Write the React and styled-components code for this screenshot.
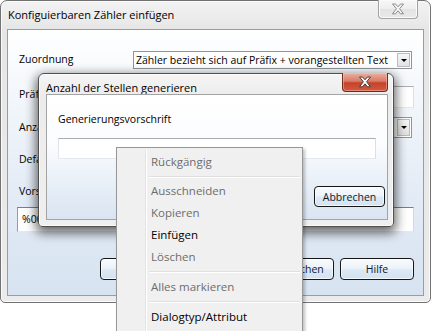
import React from "react";
import styled, { createGlobalStyle } from "styled-components";

const GlobalStyle = createGlobalStyle`
  html, body { margin: 0; padding: 0; background: #ffffff; }
  body {
    font-family: "Open Sans", "Noto Sans", sans-serif;
    font-size: 10.5px;
    color: #000;
  }
`;

const Desktop = styled.div`
  position: relative;
  width: 432px;
  height: 331px;
  overflow: hidden;
  background: #ffffff;
`;

const Window = styled.div`
  width: 431px;
  height: 303px;
  box-sizing: border-box;
  border: 1px solid #727272;
  border-radius: 7px 7px 5px 5px;
  background: linear-gradient(#f2f2f2, #e6e6e6 30px, #ebebeb);
  box-shadow: inset 0 0 0 1px #fbfbfb;
  display: flex;
  flex-direction: column;
`;

const TitleBar = styled.div`
  height: ${(p) => p.$h}px;
  flex: none;
  display: flex;
  align-items: flex-start;
  padding-left: 7px;
`;

const TitleText = styled.span`
  margin-top: ${(p) => p.$mt}px;
  font-size: 11px;
  line-height: 14px;
  white-space: nowrap;
`;

const CloseButton = styled.div`
  margin-left: auto;
  margin-right: ${(p) => p.$mr}px;
  margin-top: -1px;
  width: ${(p) => p.$w}px;
  height: ${(p) => p.$h}px;
  box-sizing: border-box;
  border: 1px solid ${(p) => (p.$active ? "#6e2b1e" : "#a3a3a3")};
  border-top: none;
  border-radius: 0 0 4px 4px;
  background: ${(p) =>
    p.$active
      ? "linear-gradient(#eab0a2 0%, #d97c66 45%, #c7422a 55%, #cf5a3e 100%)"
      : "linear-gradient(#f7f7f7 0%, #eeeeee 50%, #e3e3e3 51%, #e9e9e9 100%)"};
  box-shadow: inset 0 0 0 1px ${(p) => (p.$active ? "rgba(255,200,190,0.45)" : "#fafafa")};
  display: flex;
  align-items: center;
  justify-content: center;
`;

const Client = styled.div`
  flex: 1;
  margin: 0 6px 6px 6px;
  border: 1px solid #9c9c9c;
  background: linear-gradient(#ffffff 0%, #f3f7fb 25%, #e4ecf6 60%, #d7e3f1 100%);
  display: flex;
  flex-direction: column;
  padding-left: 11px;
  min-height: 0;
`;

const Row = styled.div`
  display: flex;
  align-items: flex-start;
  margin-top: ${(p) => p.$mt}px;
  height: ${(p) => p.$h}px;
  flex: none;
`;

const Label = styled.div`
  width: 114px;
  flex: none;
  padding-top: ${(p) => p.$pt || 0}px;
  line-height: 16px;
  white-space: nowrap;
`;

const Select = styled.div`
  width: ${(p) => p.$w}px;
  height: 100%;
  box-sizing: border-box;
  border: 1px solid #8f959d;
  background: #ffffff;
  display: flex;
  align-items: center;
  padding: 1px 1px 1px 2px;
`;

const SelectText = styled.span`
  flex: 1;
  white-space: nowrap;
  overflow: hidden;
  line-height: 14px;
`;

const DropButton = styled.div`
  width: 13px;
  height: 100%;
  box-sizing: border-box;
  border: 1px solid #b9bcc0;
  background: linear-gradient(#f7f7f7, #e2e2e2);
  display: flex;
  align-items: center;
  justify-content: center;
`;

const Arrow = styled.div`
  width: 0;
  height: 0;
  border-left: 3px solid transparent;
  border-right: 3px solid transparent;
  border-top: 3px solid #000;
`;

const TextField = styled.div`
  width: ${(p) => p.$w}px;
  height: ${(p) => p.$h}px;
  margin-left: ${(p) => p.$ml || 0}px;
  margin-top: ${(p) => p.$mt || 0}px;
  box-sizing: border-box;
  border: 1px solid;
  border-color: ${(p) => (p.$dark ? "#7e7e7e #d5d8de #e3e9ef #9a9a9a" : "#abadb3 #dbdfe6 #e3e9ef #e2e3ea")};
  background: #ffffff;
  padding: 3px 4px;
  line-height: 16px;
  flex: none;
  white-space: nowrap;
  overflow: hidden;
`;

const ButtonRow = styled.div`
  display: flex;
  gap: 6px;
  margin-top: ${(p) => p.$mt}px;
  padding-left: ${(p) => p.$pl}px;
  flex: none;
`;

const Button = styled.div`
  width: ${(p) => p.$w}px;
  height: ${(p) => p.$h}px;
  margin-top: ${(p) => p.$mt || 0}px;
  margin-left: ${(p) => p.$ml || 0}px;
  box-sizing: border-box;
  border: 1px solid #161616;
  border-radius: 4px;
  background: linear-gradient(#f8fbfe 0%, #edf3fa 45%, #dce8f5 55%, #d3e2f2 100%);
  box-shadow: inset 0 0 0 1px rgba(255, 255, 255, 0.7);
  display: flex;
  align-items: center;
  justify-content: center;
  line-height: 16px;
  color: #0b1a2e;
  flex: none;
`;

const Modal = styled.div`
  position: absolute;
  left: 38px;
  top: 73px;
  width: 356px;
  height: 154px;
  box-sizing: border-box;
  border: 1px solid #505050;
  border-radius: 6px 6px 4px 4px;
  background: linear-gradient(#f5f5f5, #ececec 22px, #efefef);
  box-shadow: 0 4px 11px 2px rgba(0, 0, 0, 0.6), inset 0 0 0 1px #fcfcfc;
  display: flex;
  flex-direction: column;
`;

const ModalBody = styled.div`
  flex: 1;
  margin: 0 5px 6px 7px;
  border: 1px solid #a3a3a3;
  background: linear-gradient(#ffffff 0%, #fbfcfe 40%, #e6eef7 75%, #dae5f2 100%);
  padding-left: 11px;
  display: flex;
  flex-direction: column;
`;

const GroupLabel = styled.div`
  margin-top: 16px;
  line-height: 16px;
`;

const Menu = styled.div`
  position: absolute;
  left: 116px;
  top: 147px;
  width: 187px;
  height: 200px;
  box-sizing: border-box;
  border: 1px solid #979797;
  background: #f0f0f0;
  box-shadow: 2px 2px 3px rgba(0, 0, 0, 0.25);
  padding: 3px 2px;
  display: flex;
  flex-direction: column;
  font-size: 11.5px;
`;

const Gutter = styled.div`
  position: absolute;
  left: 28px;
  top: 2px;
  bottom: 0;
  width: 1px;
  background: #e2e3e3;
  border-right: 1px solid #ffffff;
`;

const MenuItem = styled.div`
  height: 22px;
  flex: none;
  display: flex;
  align-items: center;
  padding-left: 32px;
  color: ${(p) => (p.$disabled ? "#6d6d6d" : "#000000")};
  line-height: 16px;
  white-space: nowrap;
  position: relative;
`;

const Separator = styled.div`
  flex: none;
  height: ${(p) => p.$h}px;
  display: flex;
  align-items: center;
  padding-left: 30px;

  &::after {
    content: "";
    flex: 1;
    height: 1px;
    background: #e0e0e0;
    border-bottom: 1px solid #ffffff;
  }
`;

const CloseGlyph = ({ active }) => (
  <svg width="14" height="12" viewBox="0 0 14 12">
    <polygon
      points="1.5,1 4.5,1 7,3.8 9.5,1 12.5,1 8.6,5.8 12.5,10.8 9.5,10.8 7,7.8 4.5,10.8 1.5,10.8 5.4,5.8"
      fill={active ? "#ffffff" : "#f6f6f6"}
      stroke={active ? "#4a3a36" : "#8b8b8b"}
      strokeWidth="1"
      strokeLinejoin="round"
    />
  </svg>
);

const menuEntries = [
  { label: "Rückgängig", disabled: true },
  { sep: 7 },
  { label: "Ausschneiden", disabled: true },
  { label: "Kopieren", disabled: true },
  { label: "Einfügen" },
  { label: "Löschen", disabled: true },
  { sep: 8 },
  { label: "Alles markieren", disabled: true },
  { sep: 8 },
  { label: "Dialogtyp/Attribut" },
];

export default function App() {
  return (
    <Desktop>
      <GlobalStyle />
      <Window>
        <TitleBar $h={28}>
          <TitleText $mt={7}>Konfiguierbaren Zähler einfügen</TitleText>
          <CloseButton $w={40} $h={19} $mr={12}>
            <CloseGlyph />
          </CloseButton>
        </TitleBar>
        <Client>
          <Row $mt={21} $h={18}>
            <Label>Zuordnung</Label>
            <Select $w={279}>
              <SelectText>Zähler bezieht sich auf Präfix + vorangestellten Text</SelectText>
              <DropButton>
                <Arrow />
              </DropButton>
            </Select>
          </Row>
          <Row $mt={17} $h={22}>
            <Label>Präfix</Label>
            <TextField $w={281} $h={22} />
          </Row>
          <Row $mt={9} $h={21}>
            <Label $pt={2}>Anzahl Stellen</Label>
            <Select $w={279}>
              <SelectText>4</SelectText>
              <DropButton>
                <Arrow />
              </DropButton>
            </Select>
          </Row>
          <Row $mt={12} $h={20}>
            <Label $pt={1}>Defaultwert</Label>
          </Row>
          <Row $mt={12} $h={18}>
            <Label $pt={1}>Vorschau</Label>
          </Row>
          <TextField $w={397} $h={25} $ml={-2} $mt={7} $dark>
            %0001
          </TextField>
          <ButtonRow $mt={26} $pl={81}>
            <Button $w={74} $h={22}>OK</Button>
            <Button $w={74} $h={22}>Übernehmen</Button>
            <Button $w={74} $h={22}>Abbrechen</Button>
            <Button $w={74} $h={22}>Hilfe</Button>
          </ButtonRow>
        </Client>
      </Window>

      <Modal>
        <TitleBar $h={20}>
          <TitleText $mt={7}>Anzahl der Stellen generieren</TitleText>
          <CloseButton $w={46} $h={19} $mr={5} $active>
            <CloseGlyph active />
          </CloseButton>
        </TitleBar>
        <ModalBody>
          <GroupLabel>Generierungsvorschrift</GroupLabel>
          <TextField $w={318} $h={21} $mt={11} />
          <Button $w={71} $h={21} $mt={27} $ml={256}>
            Abbrechen
          </Button>
        </ModalBody>
      </Modal>

      <Menu>
        <Gutter />
        {menuEntries.map((e, i) =>
          e.sep ? (
            <Separator key={i} $h={e.sep} />
          ) : (
            <MenuItem key={i} $disabled={e.disabled}>
              {e.label}
            </MenuItem>
          )
        )}
      </Menu>
    </Desktop>
  );
}
